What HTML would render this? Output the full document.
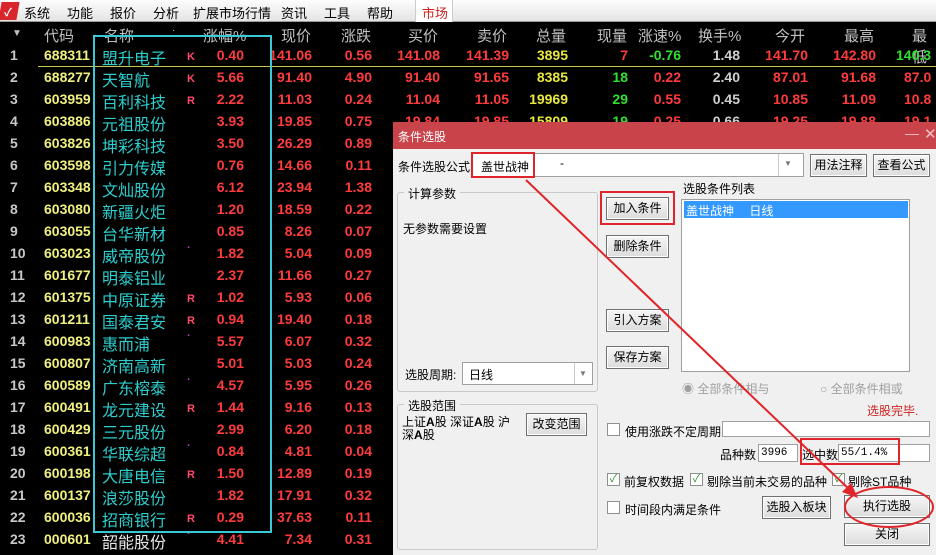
<!DOCTYPE html>
<html><head><meta charset="utf-8">
<style>
*{margin:0;padding:0;box-sizing:border-box}
body{width:936px;height:555px;overflow:hidden;background:#000;position:relative;font-family:"Liberation Sans","Noto Sans CJK SC","WenQuanYi Zen Hei",sans-serif}
.a{position:absolute;white-space:nowrap}
#menu{position:absolute;left:0;top:0;width:936px;height:22px;background:linear-gradient(#fdfdfd,#e4e4e4);border-bottom:1px solid #999;font-size:13px;color:#000}
#menu span{position:absolute;top:3px}
.row{position:absolute;left:0;width:936px;height:22px;font-size:14px;font-weight:bold;color:#ff3c3c}
.row span{position:absolute;top:3px}
.row .i{left:10px;color:#c8c8c8;font-weight:bold;font-size:14px}
.row .c{left:44px;color:#f0f080}
.row .n{left:102px;top:1px;color:#2ecece;font-size:16px;font-weight:normal}
.row .m{left:187px;font-size:11px;top:7px;color:#ff4a6a}
.r{text-align:right}
.hd{position:absolute;top:23px;height:22px;left:0;width:936px;font-size:15px;color:#c0c0c0}
.hd span{position:absolute;top:2px}
#dlg{position:absolute;left:393px;top:122px;width:543px;height:433px;background:#f0f0f0;font-size:12px;color:#000}
.t{position:absolute;white-space:nowrap;font-size:12px}
.btn{position:absolute;border:1px solid #707070;background:linear-gradient(#f6f6f6,#dcdcdc);text-align:center;font-size:12px;line-height:20px;box-shadow:inset 0 0 0 1px #fff}
.box{position:absolute;background:#fff;border:1px solid #a0a0a0}
.grp{position:absolute;border:1px solid #c8c8c8;border-radius:3px}
.cb{position:absolute;width:13px;height:13px;border:1px solid #8e8f8f;background:#fff;font-size:11px;line-height:11px;text-align:center;color:#2a9a2a}
.red{position:absolute;border:2px solid #e0242a}
</style></head><body>
<div id="menu">
 <div class="a" style="left:0;top:2px;width:18px;height:18px;background:#d8262c;transform:skewX(-10deg)"></div>
 <div class="a" style="left:4px;top:4px;color:#fff;font-size:11px;font-weight:bold">✓</div>
 <span style="left:24px">系统</span><span style="left:67px">功能</span><span style="left:110px">报价</span><span style="left:153px">分析</span><span style="left:193px">扩展市场行情</span><span style="left:281px">资讯</span><span style="left:324px">工具</span><span style="left:367px">帮助</span>
 <div class="a" style="left:415px;top:0;width:38px;height:22px;background:#fff;border-left:1px solid #ccc;border-right:1px solid #ccc"></div>
 <span style="left:422px;color:#d02020">市场</span>
</div>
<div class="hd">
 <span style="left:12px;font-size:10px;top:5px">▼</span>
 <span style="left:44px">代码</span><span style="left:104px">名称</span><span style="left:172px;font-size:10px">·</span>
 <span style="left:203px">涨幅%</span><span style="left:281px">现价</span><span style="left:341px">涨跌</span><span style="left:408px">买价</span><span style="left:477px">卖价</span><span style="left:536px">总量</span><span style="left:597px">现量</span><span style="left:638px">涨速%</span><span style="left:698px">换手%</span><span style="left:775px">今开</span><span style="left:844px">最高</span><span style="left:912px">最低</span>
</div>
<div id="rows" style="position:absolute;left:0;top:0;width:936px;height:555px"></div>
<div class="a" style="left:38px;top:66px;width:898px;height:1px;background:#c8c850"></div>
<div class="a" style="left:93px;top:35px;width:179px;height:498px;border:2px solid #38c8d8"></div>

<div class="row" style="top:44px"><span class="r" style="left:380px;width:60px">141.08</span><span class="r" style="left:450px;width:59px">141.39</span><span class="r" style="left:510px;width:58px;color:#e8e840">3895</span><span class="r" style="left:580px;width:48px">7</span><span class="r" style="left:630px;width:51px;color:#30e030">-0.76</span><span class="r" style="left:690px;width:50px;color:#d0d0d0">1.48</span><span class="r" style="left:750px;width:58px">141.70</span><span class="r" style="left:820px;width:56px">142.80</span><span style="left:896px;color:#30e030">140.3</span></div>
<div class="row" style="top:66px"><span class="r" style="left:380px;width:60px">91.40</span><span class="r" style="left:450px;width:59px">91.65</span><span class="r" style="left:510px;width:58px;color:#e8e840">8385</span><span class="r" style="left:580px;width:48px;color:#30e030">18</span><span class="r" style="left:630px;width:51px">0.22</span><span class="r" style="left:690px;width:50px;color:#d0d0d0">2.40</span><span class="r" style="left:750px;width:58px">87.01</span><span class="r" style="left:820px;width:56px">91.68</span><span style="left:904px">87.0</span></div>
<div class="row" style="top:88px"><span class="r" style="left:380px;width:60px">11.04</span><span class="r" style="left:450px;width:59px">11.05</span><span class="r" style="left:510px;width:58px;color:#e8e840">19969</span><span class="r" style="left:580px;width:48px;color:#30e030">29</span><span class="r" style="left:630px;width:51px">0.55</span><span class="r" style="left:690px;width:50px;color:#d0d0d0">0.45</span><span class="r" style="left:750px;width:58px">10.85</span><span class="r" style="left:820px;width:56px">11.09</span><span style="left:904px">10.8</span></div>
<div class="row" style="top:110px"><span class="r" style="left:380px;width:60px">19.84</span><span class="r" style="left:450px;width:59px">19.85</span><span class="r" style="left:510px;width:58px;color:#e8e840">15809</span><span class="r" style="left:580px;width:48px;color:#30e030">19</span><span class="r" style="left:630px;width:51px">0.25</span><span class="r" style="left:690px;width:50px;color:#d0d0d0">0.66</span><span class="r" style="left:750px;width:58px">19.25</span><span class="r" style="left:820px;width:56px">19.88</span><span style="left:904px">19.1</span></div>

<script>
(function(){
var d=[["688311","盟升电子","K","0.40","141.06","0.56"],["688277","天智航","K","5.66","91.40","4.90"],["603959","百利科技","R","2.22","11.03","0.24"],["603886","元祖股份","","3.93","19.85","0.75"],["603826","坤彩科技","","3.50","26.29","0.89"],["603598","引力传媒","","0.76","14.66","0.11"],["603348","文灿股份","","6.12","23.94","1.38"],["603080","新疆火炬","","1.20","18.59","0.22"],["603055","台华新材","","0.85","8.26","0.07"],["603023","威帝股份","·","1.82","5.04","0.09"],["601677","明泰铝业","","2.37","11.66","0.27"],["601375","中原证券","R","1.02","5.93","0.06"],["601211","国泰君安","R","0.94","19.40","0.18"],["600983","惠而浦","·","5.57","6.07","0.32"],["600807","济南高新","","5.01","5.03","0.24"],["600589","广东榕泰","·","4.57","5.95","0.26"],["600491","龙元建设","R","1.44","9.16","0.13"],["600429","三元股份","","2.99","6.20","0.18"],["600361","华联综超","·","0.84","4.81","0.04"],["600198","大唐电信","R","1.50","12.89","0.19"],["600137","浪莎股份","","1.82","17.91","0.32"],["600036","招商银行","R","0.29","37.63","0.11"],["000601","韶能股份","·","4.41","7.34","0.31"]];
var h="";
for(var k=0;k<d.length;k++){var r=d[k];var tp=44+22*k;
h+='<div class="row" style="top:'+tp+'px"><span class="i">'+(k+1)+'</span><span class="c">'+r[0]+'</span><span class="n"'+(k==22?' style="color:#e8e8e8"':'')+'>'+r[1]+'</span><span class="m"'+(r[2]=="·"?' style="color:#b040d0;top:0"':'')+'>'+r[2]+'</span><span class="r" style="left:196px;width:48px">'+r[3]+'</span><span class="r" style="left:256px;width:56px">'+r[4]+'</span><span class="r" style="left:316px;width:56px">'+r[5]+'</span></div>';}
document.getElementById("rows").innerHTML=h;
})();
</script>

<div id="dlg">
 <div class="t" style="left:0;top:0;width:543px;height:27px;background:#c9434b"></div>
 <div class="t" style="left:5px;top:6px;color:#fff;font-size:12px">条件选股</div>
 <div class="t" style="left:512px;top:3px;color:#f0c0c0;font-size:14px">—</div>
 <div class="t" style="left:531px;top:3px;color:#f0c0c0;font-size:15px">✕</div>

 <div class="t" style="left:5px;top:36px">条件选股公式</div>
 <div class="box" style="left:79px;top:31px;width:332px;height:24px"></div>
 <div class="t" style="left:88px;top:36px">盖世战神</div>
 <div class="t" style="left:167px;top:34px">-</div>
 <div class="t" style="left:385px;top:32px;width:1px;height:22px;background:#ccc"></div>
 <div class="t" style="left:391px;top:37px;font-size:8px;color:#777">▼</div>
 <div class="red" style="left:78px;top:30px;width:64px;height:26px"></div>
 <div class="btn" style="left:417px;top:32px;width:57px;height:23px">用法注释</div>
 <div class="btn" style="left:480px;top:32px;width:57px;height:23px">查看公式</div>

 <div class="grp" style="left:4px;top:70px;width:201px;height:200px"></div>
 <div class="t" style="left:11px;top:63px;background:#f0f0f0;padding:0 4px">计算参数</div>
 <div class="t" style="left:10px;top:98px">无参数需要设置</div>
 <div class="t" style="left:12px;top:244px">选股周期:</div>
 <div class="box" style="left:69px;top:240px;width:131px;height:23px"></div>
 <div class="t" style="left:76px;top:244px">日线</div>
 <div class="t" style="left:181px;top:241px;width:1px;height:21px;background:#ccc"></div>
 <div class="t" style="left:186px;top:247px;font-size:8px;color:#777">▼</div>

 <div class="grp" style="left:4px;top:282px;width:201px;height:146px"></div>
 <div class="t" style="left:11px;top:275px;background:#f0f0f0;padding:0 4px">选股范围</div>
 <div class="t" style="left:9px;top:294px;line-height:13px">上证<b>A</b>股 深证<b>A</b>股 沪<br>深<b>A</b>股</div>
 <div class="btn" style="left:133px;top:291px;width:61px;height:23px">改变范围</div>

 <div class="btn" style="left:213px;top:75px;width:63px;height:23px">加入条件</div>
 <div class="red" style="left:207px;top:69px;width:75px;height:34px"></div>
 <div class="btn" style="left:213px;top:113px;width:63px;height:23px">删除条件</div>
 <div class="btn" style="left:213px;top:187px;width:63px;height:23px">引入方案</div>
 <div class="btn" style="left:213px;top:224px;width:63px;height:23px">保存方案</div>

 <div class="t" style="left:290px;top:58px">选股条件列表</div>
 <div class="box" style="left:288px;top:77px;width:229px;height:173px"></div>
 <div class="t" style="left:291px;top:79px;width:224px;height:17px;background:#3399ff"></div>
 <div class="t" style="left:293px;top:80px;color:#fff">盖世战神　 日线</div>

 <div class="t" style="left:289px;top:258px;color:#a0a0a0">◉ 全部条件相与</div>
 <div class="t" style="left:427px;top:258px;color:#a0a0a0">○ 全部条件相或</div>
 <div class="t" style="left:474px;top:280px;color:#d02020">选股完毕.</div>

 <div class="cb" style="left:214px;top:301px"></div>
 <div class="t" style="left:232px;top:301px">使用涨跌不定周期</div>
 <div class="box" style="left:329px;top:299px;width:208px;height:16px"></div>
 <div class="t" style="left:327px;top:324px">品种数</div>
 <div class="box" style="left:365px;top:322px;width:40px;height:18px;font-size:11px;line-height:16px;padding-left:2px;font-family:'Liberation Mono',monospace">3996</div>
 <div class="t" style="left:409px;top:324px">选中数</div>
 <div class="box" style="left:445px;top:322px;width:92px;height:18px;font-size:11px;line-height:16px;padding-left:2px;font-family:'Liberation Mono',monospace">55/1.4%</div>
 <div class="red" style="left:407px;top:316px;width:100px;height:27px"></div>

 <div class="cb" style="left:214px;top:351px">✓</div>
 <div class="t" style="left:231px;top:351px">前复权数据</div>
 <div class="cb" style="left:297px;top:351px">✓</div>
 <div class="t" style="left:314px;top:351px">剔除当前未交易的品种</div>
 <div class="cb" style="left:439px;top:351px">✓</div>
 <div class="t" style="left:455px;top:351px">剔除ST品种</div>
 <div class="cb" style="left:214px;top:379px"></div>
 <div class="t" style="left:232px;top:379px">时间段内满足条件</div>
 <div class="btn" style="left:369px;top:374px;width:69px;height:23px">选股入板块</div>
 <div class="btn" style="left:451px;top:373px;width:86px;height:23px">执行选股</div>
 <div class="btn" style="left:451px;top:401px;width:86px;height:23px">关闭</div>
 <div class="t" style="left:451px;top:364px;width:90px;height:42px;border:2px solid #e0242a;border-radius:50%"></div>
</div>
<svg class="a" style="left:0;top:0" width="936" height="555">
 <line x1="526" y1="180" x2="852" y2="492" stroke="#e0242a" stroke-width="2"/>
 <polygon points="858,498 842,492 851,483" fill="#e0242a"/>
</svg>
</body></html>
